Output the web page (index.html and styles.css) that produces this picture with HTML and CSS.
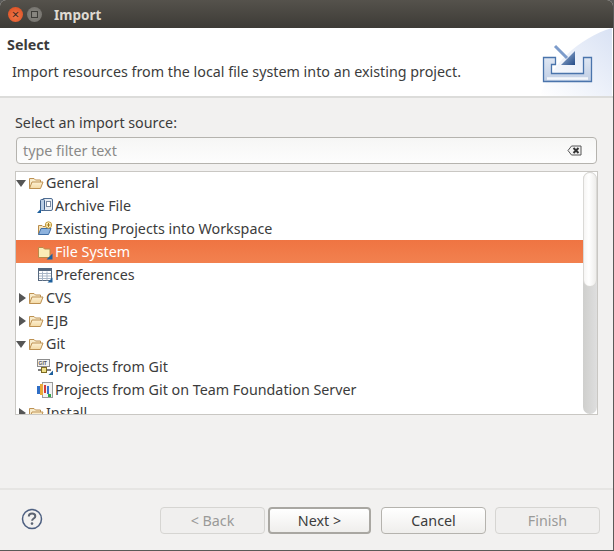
FILE: index.html
```html
<!DOCTYPE html>
<html lang="en">
<head>
<meta charset="utf-8">
<title>Import</title>
<link rel="stylesheet" href="styles.css">
</head>
<body>
<svg class="defs" width="0" height="0" aria-hidden="true">
  <defs>
    <linearGradient id="fold" x1="0" y1="0" x2="0" y2="1"><stop offset="0" stop-color="#fdf1d4"/><stop offset="1" stop-color="#f3d9a4"/></linearGradient>
    <symbol id="folder" viewBox="0 0 16 16">
      <path d="M1.500 13.500V3.500h4.500l1.500 1.500h5v2" fill="#f8ebcb" stroke="#bd9152"/>
      <path d="M1.500 13.500l2.500-6.500h11l-2.500 6.500z" fill="url(#fold)" stroke="#bd9152" stroke-linejoin="round"/>
    </symbol>
  </defs>
</svg>
<div class="window">
  <header class="titlebar">
    <span class="wbtn close">×</span>
    <span class="wbtn max"><i></i></span>
    <span class="wtitle">Import</span>
  </header>
  <section class="banner">
    <div class="banner-text">
      <h1>Select</h1>
      <p>Import resources from the local file system into an existing project.</p>
    </div>
    <svg class="banner-icon" width="96" height="68" viewBox="0 0 96 68">
      <defs>
        <linearGradient id="wash" x1="0" y1="1" x2="1" y2="0"><stop offset="0" stop-color="#fff"/><stop offset="1" stop-color="#d9e2f4"/></linearGradient>
        <linearGradient id="tray" x1="0" y1="0" x2="0" y2="1"><stop offset="0" stop-color="#dfe7f3"/><stop offset="1" stop-color="#c0cee5"/></linearGradient>
        <linearGradient id="arr" x1="0" y1="0" x2="1" y2="1"><stop offset="0" stop-color="#a9c0e0"/><stop offset="1" stop-color="#234a86"/></linearGradient>
      </defs>
      <path d="M24 68C34 38 62 10 96 0V68z" fill="url(#wash)"/>
      <path d="M27.500 29.500H39.500V36.500H35.500V45.500H67.500V29.500H75.500V53.500H27.500z" fill="url(#tray)" stroke="#4a74ac" stroke-width="1.300"/>
      <path d="M31 50.500h41" stroke="#f4f7fb" stroke-width="2.500"/>
      <path d="M39 18l12 12" stroke="#7d9ccb" stroke-width="3"/>
      <path d="M59 23v14H45z" fill="url(#arr)"/>
    </svg>
  </section>
  <main class="body">
    <label class="source-label">Select an import source:</label>
    <div class="filter">
      <span class="placeholder">type filter text</span>
      <svg class="clear" width="15" height="11" viewBox="0 0 15 11">
        <path d="M4.500 1H14v9H4.500L1 5.500z" fill="#f4f4f4" stroke="#555"/>
        <path d="M6.500 3l5 5M11.500 3l-5 5" stroke="#333" stroke-width="2"/>
      </svg>
    </div>
    <div class="tree">
      <ul class="rows">
        <li class="row"><span class="twist open"></span><svg class="ico"><use href="#folder"/></svg>General</li>
        <li class="row child">
          <svg class="ico" viewBox="0 0 16 16">
            <rect x="5.500" y="0.500" width="10" height="12" rx="1.500" fill="#e8edf3" stroke="#4f6d92"/>
            <rect x="3.500" y="1.500" width="4" height="11" rx="1" fill="#b9cde3" stroke="#3e5f8a"/>
            <rect x="9.500" y="3.500" width="4" height="5" fill="#fff" stroke="#7a8aa0"/>
            <path d="M4 10.500v4.500H0z" fill="#1d5f9c"/>
          </svg>Archive File</li>
        <li class="row child">
          <svg class="ico" viewBox="0 0 16 16">
            <path d="M1.500 13.500V4.500h3.500l1 1h5v2" fill="#f6e6bd" stroke="#b98b4a"/>
            <path d="M1.500 13.500l2.500-6h10l-2.500 6z" fill="#8db2dd" stroke="#3f6ea6"/>
            <circle cx="11.500" cy="4" r="3.200" fill="#fff3c0" stroke="#c49a3c"/>
            <path d="M11.500 2v4M9.500 4h4" stroke="#a87a1c"/>
          </svg>Existing Projects into Workspace</li>
        <li class="row child selected">
          <svg class="ico" viewBox="0 0 16 16">
            <path d="M1.500 13.500v-10h4.500l1.500 1.500h5.500v8.500z" fill="#fbecb8" stroke="#b98b4a"/>
            <path d="M15.500 9.500v6h-6z" fill="#1d5f9c"/>
          </svg>File System</li>
        <li class="row child">
          <svg class="ico" viewBox="0 0 16 16">
            <rect x="1.500" y="1.500" width="13" height="12" fill="#fff" stroke="#56687e"/>
            <path d="M1.500 3h13" stroke="#56687e" stroke-width="2"/>
            <path d="M5.500 4.500v9M10 4.500v9M2 6.500h12M2 9h12M2 11.500h12" stroke="#a9b6c6"/>
            <path d="M15.500 10.500v5h-5z" fill="#1d5f9c"/>
          </svg>Preferences</li>
        <li class="row"><span class="twist"></span><svg class="ico"><use href="#folder"/></svg>CVS</li>
        <li class="row"><span class="twist"></span><svg class="ico"><use href="#folder"/></svg>EJB</li>
        <li class="row"><span class="twist open"></span><svg class="ico"><use href="#folder"/></svg>Git</li>
        <li class="row child">
          <svg class="ico" viewBox="0 0 16 16">
            <rect x="0.500" y="0.500" width="12" height="7" fill="#f2f2f2" stroke="#8d8d8d"/>
            <text class="git" x="1.600" y="6">GIT</text>
            <path d="M1 11h13" stroke="#7d7d7d" stroke-width="2"/>
            <rect x="4.500" y="8.500" width="5" height="5" fill="#efe08a" stroke="#7d6b22"/>
            <path d="M16 11.500v4.500h-4.500z" fill="#1d5f9c"/>
          </svg>Projects from Git</li>
        <li class="row child">
          <svg class="ico" viewBox="0 0 16 16">
            <rect x="5.500" y="0.500" width="10" height="15" fill="#f3f3f3" stroke="#9a9a9a"/>
            <rect x="7" y="3" width="2" height="8" fill="#d23c3c"/>
            <rect x="10" y="4" width="2" height="8" fill="#3a73c9"/>
            <rect x="11" y="12" width="3" height="3" fill="#33a64a"/>
            <rect x="0" y="4" width="3" height="8" fill="#2f6ec6"/>
            <rect x="3" y="2" width="3" height="11" fill="#e9a93a"/>
          </svg>Projects from Git on Team Foundation Server</li>
        <li class="row"><span class="twist"></span><svg class="ico"><use href="#folder"/></svg>Install</li>
      </ul>
      <div class="scrollbar"><div class="thumb"></div></div>
    </div>
  </main>
  <footer class="footer">
    <svg class="help" width="22" height="22" viewBox="0 0 22 22">
      <circle cx="11" cy="11" r="9.500" fill="none" stroke="#4d5f80" stroke-width="1.500"/>
      <path d="M7.800 8.500c0-2 1.500-3 3.300-3s3.200 1 3.200 2.700c0 2.400-3.200 2.300-3.200 4.600" fill="none" stroke="#5c6472" stroke-width="2"/>
      <circle cx="11" cy="15.600" r="1.300" fill="#5c6472"/>
    </svg>
    <div class="buttons">
      <button class="btn" disabled>&lt; Back</button>
      <button class="btn default">Next &gt;</button>
      <button class="btn cancel">Cancel</button>
      <button class="btn" disabled>Finish</button>
    </div>
  </footer>
</div>
</body>
</html>
```
FILE: styles.css
```css
* { box-sizing: border-box; }
html, body { margin: 0; height: 100%; }
body {
  background: #5a5a58;
  font-family: "Noto Sans", "Liberation Sans", sans-serif;
  font-size: 14.300px;
  color: #3c3c3c;
  overflow: hidden;
}
.defs { position: absolute; }
.window {
  width: 613px;
  height: 550px;
  background: #f2f1f0;
  display: flex;
  flex-direction: column;
  border-radius: 6px 6px 0 0;
  overflow: hidden;
}
.titlebar {
  height: 28px;
  flex: none;
  background: linear-gradient(#55524c, #3d3b36);
  display: flex;
  align-items: center;
  padding: 1px 0 0 8px;
  gap: 4px;
}
.wbtn {
  width: 15px;
  height: 15px;
  border-radius: 50%;
  display: flex;
  align-items: center;
  justify-content: center;
}
.close {
  background: radial-gradient(circle at 50% 60%, #f0794a, #d9481c);
  color: #3c2a22;
  font-size: 13px;
  line-height: 1;
}
.max {
  background: radial-gradient(#8b8983, #6f6d68);
}
.max i {
  width: 7px;
  height: 7px;
  border: 1px solid #3e3d39;
  display: block;
}
.wtitle {
  margin-left: 8px;
  color: #dfdbd2;
  font-weight: 700;
  font-size: 13.500px;
}
.banner {
  height: 70px;
  flex: none;
  background: #fff;
  border-bottom: 2px solid #dcdcda;
  display: flex;
  justify-content: space-between;
}
.banner-text h1 {
  margin: 8px 0 0 7px;
  font-size: 14.300px;
  font-weight: 700;
  line-height: 18px;
  color: #3c3c3c;
}
.banner-text p {
  margin: 9px 0 0 12px;
  font-size: 14.300px;
  line-height: 18px;
}
.banner-icon { flex: none; align-self: flex-start; margin-right: 1px; }
.body {
  flex: 1;
  padding: 16px 15px 0 15px;
  display: flex;
  flex-direction: column;
}
.source-label {
  font-size: 14.300px;
  line-height: 18px;
  margin-bottom: 5px;
}
.filter {
  width: 581px;
  height: 27px;
  margin-left: 1px;
  border: 1px solid #b5b3ae;
  border-radius: 4px;
  background: linear-gradient(#f6f6f5, #fdfdfd);
  display: flex;
  align-items: center;
  justify-content: space-between;
  padding: 0 14px 0 6px;
}
.placeholder { color: #8a8a88; font-size: 14.300px; }
.clear { flex: none; }
.tree {
  margin-top: 7px;
  width: 583px;
  height: 244px;
  background: #fff;
  border: 1px solid #c9c7c3;
  display: flex;
  overflow: hidden;
}
.rows {
  list-style: none;
  margin: -1px 0 0;
  padding: 0;
  flex: 1;
  min-width: 0;
  overflow: hidden;
}
.row {
  height: 23px;
  display: flex;
  align-items: center;
  font-size: 14.300px;
  padding-left: 12px;
  white-space: nowrap;
}
.row.child { padding-left: 21px; }
.selected {
  background: linear-gradient(#ef7442, #f2814f);
  color: #fff;
}
.twist {
  position: relative;
  width: 0;
  height: 0;
}
.twist::before {
  content: "";
  position: absolute;
  left: -9px;
  top: -5px;
  border-left: 7px solid #555;
  border-top: 5px solid transparent;
  border-bottom: 5px solid transparent;
}
.twist.open::before {
  left: -12px;
  top: -3px;
  border-top: 7px solid #555;
  border-left: 5px solid transparent;
  border-right: 5px solid transparent;
  border-bottom: 0;
}
.row .ico {
  width: 16px;
  height: 16px;
  flex: none;
  margin-right: 2px;
}
.git { font: 700 5px "Liberation Sans", sans-serif; fill: #555; }
.scrollbar {
  width: 14px;
  flex: none;
  background: linear-gradient(90deg, #cfcfcd, #dedede);
  border-radius: 7px;
}
.thumb {
  height: 115px;
  background: linear-gradient(90deg, #f6f5f4, #fff 40%, #eeedeb);
  border: 1px solid #dad9d6;
  border-radius: 7px;
}
.footer {
  height: 62px;
  flex: none;
  border-top: 2px solid #e6e5e3;
  display: flex;
  align-items: flex-start;
  justify-content: space-between;
  padding: 17px 13px 0 21px;
}
.help { margin-top: 1px; }
.buttons { display: flex; }
.btn {
  width: 105px;
  height: 27px;
  margin-left: 4px;
  border: 1px solid #b5b3ae;
  border-radius: 4px;
  background: linear-gradient(#fff, #efeeec);
  font: 14.300px "Noto Sans", "Liberation Sans", sans-serif;
  color: #3c3c3c;
  padding: 0;
}
.btn:disabled {
  background: #f0efee;
  border-color: #d6d5d2;
  color: #9a9a98;
}
.btn:first-child { margin-left: 0; }
.btn.default {
  width: 103px;
  margin-left: 3px;
  border: 2px solid #a9a7a2;
}
.btn.cancel { margin-left: 10px; }
.btn.cancel + .btn { margin-left: 9px; }
```
